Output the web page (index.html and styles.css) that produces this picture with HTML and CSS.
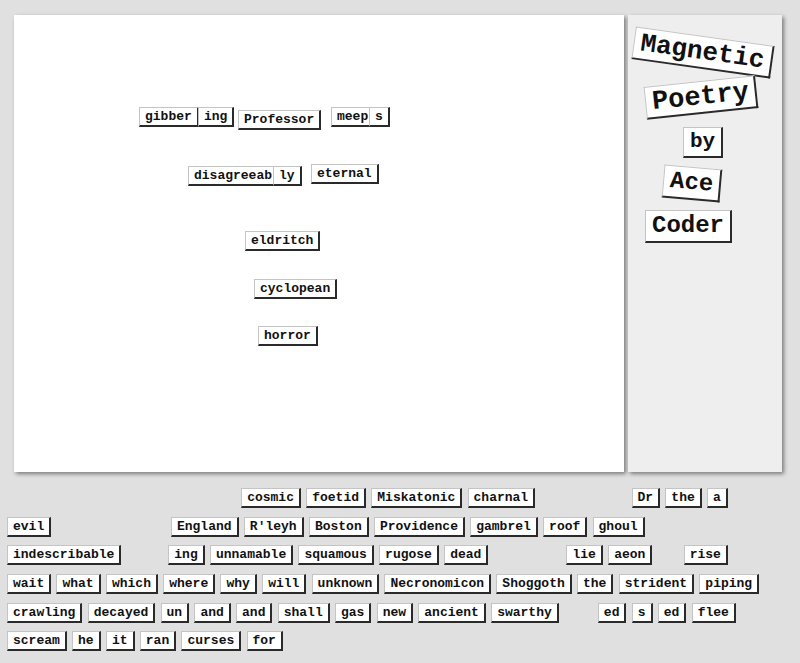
FILE: index.html
```html
<!DOCTYPE html>
<html lang="en">
<head>
<meta charset="utf-8">
<title>Magnetic Poetry</title>
<link rel="stylesheet" href="styles.css">
</head>
<body>
<div class="top">
  <div class="board">
    <span class="tile m-gibber">gibber</span>
    <span class="tile m-ing">ing</span>
    <span class="tile m-professor">Professor</span>
    <span class="tile m-meep">meep</span>
    <span class="tile m-s">s</span>
    <span class="tile m-disagreeab">disagreeab</span>
    <span class="tile m-ly">ly</span>
    <span class="tile m-eternal">eternal</span>
    <span class="tile m-eldritch">eldritch</span>
    <span class="tile m-cyclopean">cyclopean</span>
    <span class="tile m-horror">horror</span>
  </div>
  <aside class="sidebar">
    <span class="title-tile t-magnetic">Magnetic</span>
    <span class="title-tile t-poetry">Poetry</span>
    <span class="title-tile t-by">by</span>
    <span class="title-tile t-ace">Ace</span>
    <span class="title-tile t-coder">Coder</span>
  </aside>
</div>
<div class="bank">
  <div class="row">
    <span class="slot w8"></span><span class="slot w9"></span><span class="slot w6"></span>
    <span class="tile">cosmic</span>
    <span class="tile">foetid</span>
    <span class="tile">Miskatonic</span>
    <span class="tile">charnal</span>
    <span class="slot w4"></span><span class="slot w3"></span>
    <span class="tile">Dr</span>
    <span class="tile">the</span>
    <span class="tile">a</span>
  </div>
  <div class="row">
    <span class="tile">evil</span>
    <span class="slot w9"></span><span class="slot w1"></span>
    <span class="tile">England</span>
    <span class="tile">R'leyh</span>
    <span class="tile">Boston</span>
    <span class="tile">Providence</span>
    <span class="tile">gambrel</span>
    <span class="tile">roof</span>
    <span class="tile">ghoul</span>
  </div>
  <div class="row">
    <span class="tile">indescribable</span>
    <span class="slot w3"></span>
    <span class="tile">ing</span>
    <span class="tile">unnamable</span>
    <span class="tile">squamous</span>
    <span class="tile">rugose</span>
    <span class="tile">dead</span>
    <span class="slot w7"></span>
    <span class="tile">lie</span>
    <span class="tile">aeon</span>
    <span class="slot w1"></span>
    <span class="tile">rise</span>
  </div>
  <div class="row">
    <span class="tile">wait</span>
    <span class="tile">what</span>
    <span class="tile">which</span>
    <span class="tile">where</span>
    <span class="tile">why</span>
    <span class="tile">will</span>
    <span class="tile">unknown</span>
    <span class="tile">Necronomicon</span>
    <span class="tile">Shoggoth</span>
    <span class="tile">the</span>
    <span class="tile">strident</span>
    <span class="tile">piping</span>
  </div>
  <div class="row">
    <span class="tile">crawling</span>
    <span class="tile">decayed</span>
    <span class="tile">un</span>
    <span class="tile">and</span>
    <span class="tile">and</span>
    <span class="tile">shall</span>
    <span class="tile">gas</span>
    <span class="tile">new</span>
    <span class="tile">ancient</span>
    <span class="tile">swarthy</span>
    <span class="slot w2"></span>
    <span class="tile">ed</span>
    <span class="tile">s</span>
    <span class="tile">ed</span>
    <span class="tile">flee</span>
  </div>
  <div class="row">
    <span class="tile">scream</span>
    <span class="tile">he</span>
    <span class="tile">it</span>
    <span class="tile">ran</span>
    <span class="tile">curses</span>
    <span class="tile">for</span>
  </div>
</div>
</body>
</html>
```

FILE: styles.css
```css
html, body {
  margin: 0;
  padding: 0;
  background: #e0e0e0;
}

body {
  width: 800px;
  height: 663px;
  overflow: hidden;
  font-family: "Liberation Mono", "Courier New", monospace;
}

.top {
  display: flex;
  gap: 4px;
  padding: 15px 0 0 14px;
}

.board {
  position: relative;
  width: 610px;
  height: 457px;
  background: #ffffff;
  box-shadow: 2px 2px 4px rgba(0, 0, 0, 0.45);
}

.sidebar {
  position: relative;
  width: 154px;
  height: 457px;
  background: #eeeeee;
  box-shadow: 2px 2px 4px rgba(0, 0, 0, 0.45);
}

.tile,
.slot {
  display: inline-block;
  box-sizing: border-box;
  height: 20px;
  padding: 1px 5px 1px 5px;
  font-family: "Liberation Mono", "Courier New", monospace;
  font-weight: bold;
  font-size: 13px;
  line-height: 15px;
  color: #111;
  background: #ffffff;
  border-style: solid;
  border-width: 1px 2px 2px 1px;
  border-color: #c4c4c4 #2a2a2a #2a2a2a #c4c4c4;
  white-space: nowrap;
}

.slot {
  visibility: hidden;
  width: calc(var(--n) * 1ch + 13px);
}

.w1 { --n: 1; }
.w2 { --n: 2; }
.w3 { --n: 3; }
.w4 { --n: 4; }
.w6 { --n: 6; }
.w7 { --n: 7; }
.w8 { --n: 8; }
.w9 { --n: 9; }

.bank {
  display: flex;
  flex-direction: column;
  gap: 8.67px;
  padding: 16px 0 0 7px;
}

.row {
  display: flex;
  gap: 5.25px;
}

/* magnets placed on the board */
.board .tile { position: absolute; }
.m-gibber { left: 125px; top: 92px; }
.m-ing { left: 184px; top: 92px; }
.m-professor { left: 224px; top: 95px; }
.m-meep { left: 317px; top: 92px; }
.m-s { left: 355px; top: 92px; }
.m-disagreeab { left: 174px; top: 151px; }
.m-ly { left: 259px; top: 151px; }
.m-eternal { left: 297px; top: 149px; }
.m-eldritch { left: 231px; top: 216px; }
.m-cyclopean { left: 240px; top: 264px; }
.m-horror { left: 244px; top: 311px; }

/* title magnets in the sidebar */
.title-tile {
  position: absolute;
  box-sizing: border-box;
  padding: 2px 6px;
  font-family: "Liberation Mono", "Courier New", monospace;
  font-weight: bold;
  font-size: 24px;
  line-height: 26px;
  color: #111;
  background: #ffffff;
  border-style: solid;
  border-width: 1px 2px 2px 1px;
  border-color: #c4c4c4 #2a2a2a #2a2a2a #c4c4c4;
  white-space: nowrap;
}

.t-magnetic { left: 5px; top: 21px; font-size: 26px; transform: rotate(8deg); }
.t-poetry { left: 17px; top: 66px; font-size: 27px; transform: rotate(-6deg); }
.t-by { left: 55px; top: 112px; font-size: 21px; line-height: 24px; }
.t-ace { left: 35px; top: 152px; transform: rotate(5deg); }
.t-coder { left: 17px; top: 195px; }
```
